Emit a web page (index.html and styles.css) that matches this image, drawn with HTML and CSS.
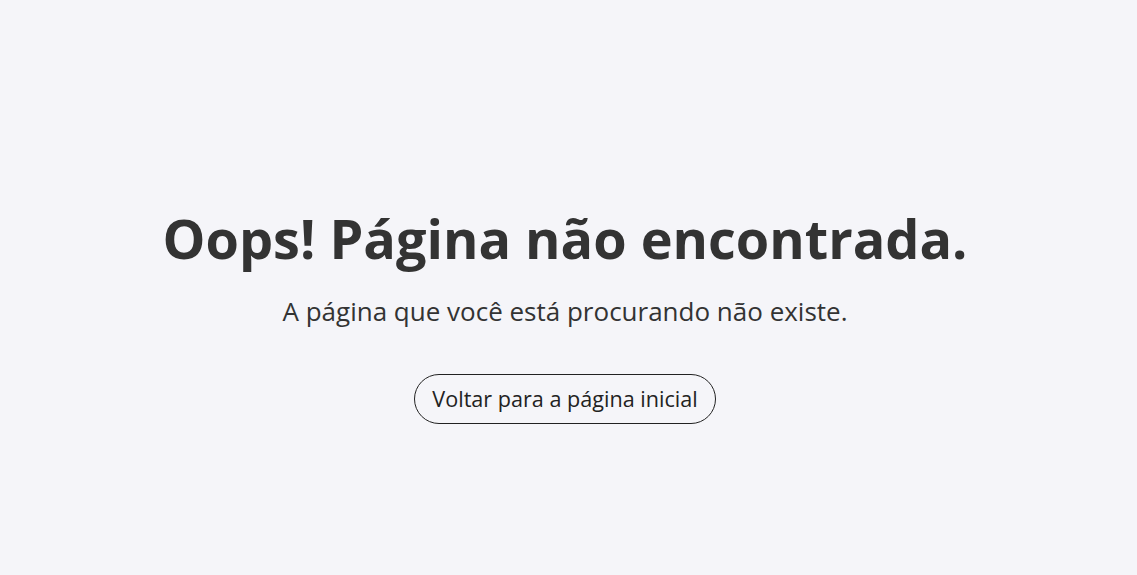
FILE: index.html
```html
<!DOCTYPE html>
<html lang="pt">
<head>
<meta charset="utf-8">
<link rel="stylesheet" href="styles.css">
</head>
<body>
<main class="page">
  <h1 class="title">Oops! Página não encontrada.</h1>
  <p class="subtitle">A página que você está procurando não existe.</p>
  <a class="btn" href="#">Voltar para a página inicial</a>
</main>
</body>
</html>
```
FILE: styles.css
```css
html, body { margin: 0; padding: 0; }
body {
  background: #f5f5f9;
  color: #333333;
  font-family: "Open Sans", "Noto Sans", sans-serif;
}
.page {
  min-height: 575px;
  box-sizing: border-box;
  display: flex;
  flex-direction: column;
  align-items: center;
  justify-content: center;
  padding: 55px 7px 0 0;
}
.title {
  margin: 0;
  font-size: 54px;
  font-weight: 700;
  line-height: 1.2;
}
.subtitle {
  margin: 22px 0 0;
  font-size: 26px;
  line-height: 1.5;
}
.btn {
  margin-top: 43px;
  display: inline-block;
  border: 1px solid #222;
  border-radius: 25px;
  padding: 0 17px;
  height: 48px;
  line-height: 48px;
  font-size: 21.6px;
  color: #222;
  text-decoration: none;
}
```
